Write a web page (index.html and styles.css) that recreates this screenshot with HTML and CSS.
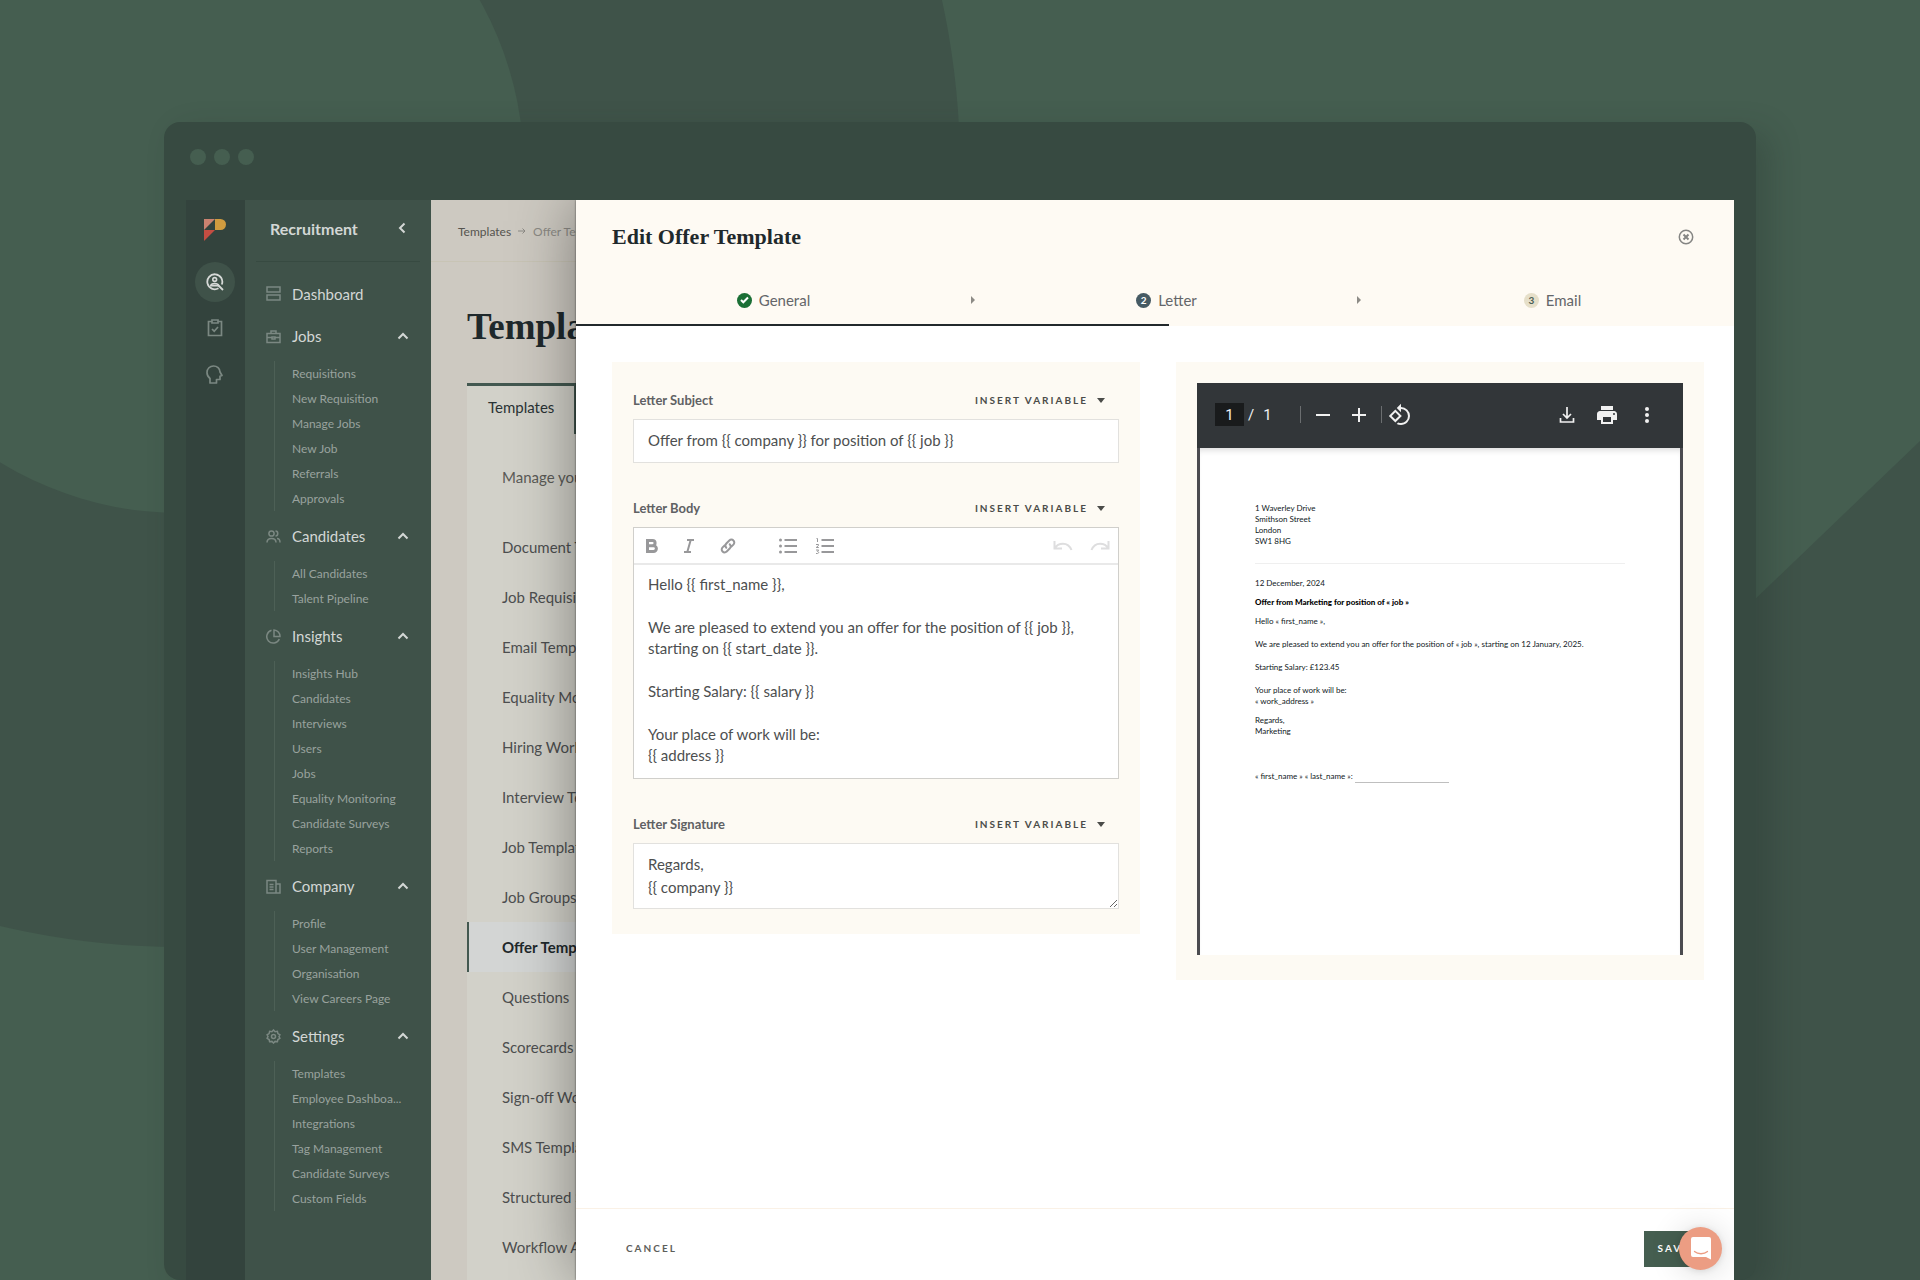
FILE: index.html
```html
<!DOCTYPE html>
<html lang="en">
<head>
<meta charset="utf-8">
<title>Edit Offer Template</title>
<link rel="stylesheet" href="styles.css">
</head>
<body>
<svg class="backdrop" viewBox="0 0 1920 1280" preserveAspectRatio="xMidYMid slice" aria-hidden="true">
  <circle cx="180" cy="167" r="780" fill="#3f5349"/>
  <circle cx="180" cy="169" r="344" fill="#455e50"/>
  <path d="M1920 441 1700 652 1100 1280h820z" fill="#3f5349"/>
</svg>
<div class="window">
  <div class="dots"><i></i><i></i><i></i></div>
  <div class="app">
    <nav class="rail" aria-label="Products">
      <a href="#" class="logo" aria-label="Home"><svg width="22" height="22" viewBox="0 0 22 22"><path d="M0 0h11L0 11z" fill="#ca8270"/><path d="M0 11h11L0 22z" fill="#c34d42"/><path d="M11 0h5.500a5.500 5.500 0 0 1 0 11H11z" fill="#d19c3f"/></svg></a>
      <a href="#" class="rail-link active" aria-label="Recruitment"><svg width="18" height="18" viewBox="0 0 18 18" fill="none" stroke="currentColor" stroke-width="1.800"><path d="M12.500 15.300A7.500 7.500 0 1 1 15.800 11.500M12 12l5 5"/><circle cx="8.700" cy="6.500" r="1.900" stroke-width="1.600"/><path d="M4.800 12.600c.5-2.800 7.300-2.800 7.800 0z" stroke-width="1.600"/></svg></a>
      <a href="#" class="rail-link" aria-label="Tasks"><svg width="16" height="18" viewBox="0 0 16 18" fill="none" stroke="currentColor" stroke-width="1.700"><path d="M4.500 2.500H1.500v14h13v-14h-3M5 1h6v3H5zM5 10l2.200 2.200L11 8"/></svg></a>
      <a href="#" class="rail-link" aria-label="People"><svg width="17" height="19" viewBox="0 0 17 19" fill="none" stroke="currentColor" stroke-width="1.700" stroke-linejoin="round"><path d="M4 18v-4.500C2 12 1 10 1 7.500 1 3.500 4 1 7.500 1S14 3.500 14 7l2 3.500-2 .7v3.300h-3.500V18z"/></svg></a>
    </nav>
    <nav class="sidebar" aria-label="Recruitment">
      <div class="side-head"><span>Recruitment</span><button type="button" aria-label="Collapse"><svg width="8" height="12" viewBox="0 0 8 12"><path d="M6.500 1.500 2 6l4.500 4.500"/></svg></button></div>
      <a href="#" class="side-top single"><svg class="ico" viewBox="0 0 15 15"><path d="M1 1h13v5H1zM1 9h13v5H1z"/></svg>Dashboard</a>

      <a href="#" class="side-top"><svg class="ico" viewBox="0 0 15 15"><path d="M1 4.500h13v9H1zM5 4.500V2h5v2.500M1 8.500h5M9 8.500h5M6 8v2h3V8z"/></svg>Jobs<svg class="chev" viewBox="0 0 12 8"><path d="M1.500 6.500 6 2l4.500 4.500"/></svg></a>
      <ul><li><a href="#">Requisitions</a></li><li><a href="#">New Requisition</a></li><li><a href="#">Manage Jobs</a></li><li><a href="#">New Job</a></li><li><a href="#">Referrals</a></li><li><a href="#">Approvals</a></li></ul>

      <a href="#" class="side-top"><svg class="ico" viewBox="0 0 15 15"><circle cx="5.500" cy="4.500" r="2.600"/><path d="M1 13.500c0-5.500 9-5.500 9 0M9.500 2c3 0 3 5 0 5M11 9.500c2 0 3 1.500 3 4"/></svg>Candidates<svg class="chev" viewBox="0 0 12 8"><path d="M1.500 6.500 6 2l4.500 4.500"/></svg></a>
      <ul><li><a href="#">All Candidates</a></li><li><a href="#">Talent Pipeline</a></li></ul>

      <a href="#" class="side-top"><svg class="ico" viewBox="0 0 15 15"><path d="M5.500 1.300A6.500 6.500 0 1 0 13.300 10M8 1v6.500h6A6.300 6.300 0 0 0 8 1z"/></svg>Insights<svg class="chev" viewBox="0 0 12 8"><path d="M1.500 6.500 6 2l4.500 4.500"/></svg></a>
      <ul><li><a href="#">Insights Hub</a></li><li><a href="#">Candidates</a></li><li><a href="#">Interviews</a></li><li><a href="#">Users</a></li><li><a href="#">Jobs</a></li><li><a href="#">Equality Monitoring</a></li><li><a href="#">Candidate Surveys</a></li><li><a href="#">Reports</a></li></ul>

      <a href="#" class="side-top"><svg class="ico" viewBox="0 0 15 15"><path d="M1 1.500h9V14H1zM10 5h4v9h-4M3.500 5.500h4M3.500 8h4M3.500 10.500h4"/></svg>Company<svg class="chev" viewBox="0 0 12 8"><path d="M1.500 6.500 6 2l4.500 4.500"/></svg></a>
      <ul><li><a href="#">Profile</a></li><li><a href="#">User Management</a></li><li><a href="#">Organisation</a></li><li><a href="#">View Careers Page</a></li></ul>

      <a href="#" class="side-top"><svg class="ico" viewBox="0 0 15 15"><path d="M7.500 1l1.600 1.700 2.300-.4.500 2.300 2 1.200L13 7.500l.9 1.800-2 1.200-.5 2.200-2.300-.3L7.500 14l-1.600-1.600-2.300.3-.5-2.200-2-1.200L2 7.500l-.9-1.700 2-1.200.5-2.300 2.300.4z"/><circle cx="7.500" cy="7.500" r="2"/></svg>Settings<svg class="chev" viewBox="0 0 12 8"><path d="M1.500 6.500 6 2l4.500 4.500"/></svg></a>
      <ul><li><a href="#">Templates</a></li><li><a href="#">Employee Dashboa...</a></li><li><a href="#">Integrations</a></li><li><a href="#">Tag Management</a></li><li><a href="#">Candidate Surveys</a></li><li><a href="#">Custom Fields</a></li></ul>
    </nav>
    <main class="page">
      <div class="crumbs"><a href="#">Templates</a><svg width="8" height="8" viewBox="0 0 8 8" fill="none" stroke="currentColor"><path d="M0 4h7M4.500 1.500 7 4 4.500 6.500"/></svg><span>Offer Templates</span></div>
      <h1>Templates</h1>
      <section class="card">
        <div class="tabs"><a href="#">Templates</a></div>
        <p>Manage your templates</p>
        <ul>
          <li><a href="#">Document Templates</a></li><li><a href="#">Job Requisitions</a></li><li><a href="#">Email Templates</a></li><li><a href="#">Equality Monitoring</a></li><li><a href="#">Hiring Workflows</a></li><li><a href="#">Interview Templates</a></li><li><a href="#">Job Templates</a></li><li><a href="#">Job Groups</a></li><li class="current"><a href="#">Offer Templates</a></li><li><a href="#">Questions</a></li><li><a href="#">Scorecards</a></li><li><a href="#">Sign-off Workflows</a></li><li><a href="#">SMS Templates</a></li><li><a href="#">Structured Surveys</a></li><li><a href="#">Workflow Automation</a></li>
        </ul>
      </section>
    </main>
    <section class="drawer" role="dialog" aria-labelledby="drawer-title">
      <header>
        <div class="title-row">
          <h2 id="drawer-title">Edit Offer Template</h2>
          <button type="button" class="close" aria-label="Close"><svg width="16" height="16" viewBox="0 0 16 16" fill="none" stroke="currentColor"><circle cx="8" cy="8" r="6.700" stroke-width="1.500"/><path d="M5.500 5.500l5 5M10.500 5.500l-5 5" stroke-width="2"/></svg></button>
        </div>
        <ol class="steps">
          <li><span class="step"><b class="num done"><svg width="9" height="8" viewBox="0 0 9 8" fill="none" stroke="#fff" stroke-width="2"><path d="M1 4l2.300 2.300L8 1.500"/></svg></b>General</span></li>
          <li><svg class="sep" viewBox="0 0 4 8"><path d="M0 0l4 4-4 4z"/></svg><span class="step"><b class="num now">2</b>Letter</span></li>
          <li><svg class="sep" viewBox="0 0 4 8"><path d="M0 0l4 4-4 4z"/></svg><span class="step"><b class="num">3</b>Email</span></li>
        </ol>
        <div class="progress"></div>
      </header>
      <div class="columns">
        <form class="panel" id="offer">
          <div class="field">
            <div class="label-row"><label for="subject">Letter Subject</label><button type="button" class="insert">Insert variable<svg viewBox="0 0 8 5"><path d="M0 0h8L4 5z"/></svg></button></div>
            <input id="subject" type="text" value="Offer from {{ company }} for position of {{ job }}">
          </div>
          <div class="field">
            <div class="label-row"><span class="label" id="body-label">Letter Body</span><button type="button" class="insert">Insert variable<svg viewBox="0 0 8 5"><path d="M0 0h8L4 5z"/></svg></button></div>
            <div class="editor">
              <div class="toolbar">
                <button type="button" aria-label="Bold"><svg viewBox="0 0 20 20" fill="none" stroke="currentColor" stroke-width="3"><path d="M5.500 4.500h5a2.500 2.500 0 0 1 0 5.200h-5zM5.500 9.700h6a2.800 2.800 0 0 1 0 5.800h-6z"/></svg></button>
                <button type="button" aria-label="Italic"><svg viewBox="0 0 20 20" fill="none" stroke="currentColor" stroke-width="2"><path d="M8 4h7M5 16h7M11.700 4 8.300 16"/></svg></button>
                <button type="button" class="link" aria-label="Link"><svg viewBox="0 0 20 20" fill="none" stroke="currentColor" stroke-width="2" stroke-linecap="round"><path d="M8.300 11.700c-1.500-1.500-1.200-3 0-4.200l3-3c1.300-1.200 3-1.200 4.100 0 1.200 1.200 1.200 2.900 0 4.100l-2 2M11.700 8.300c1.500 1.500 1.200 3 0 4.200l-3 3c-1.300 1.200-3 1.200-4.100 0-1.200-1.200-1.200-2.900 0-4.100l2-2"/></svg></button>
                <button type="button" class="list" aria-label="Bulleted list"><svg viewBox="0 0 20 20" fill="currentColor"><circle cx="2.500" cy="4" r="1.500"/><circle cx="2.500" cy="10" r="1.500"/><circle cx="2.500" cy="16" r="1.500"/><path d="M6.500 3h12.500v2H6.500zM6.500 9h12.500v2H6.500zM6.500 15h12.500v2H6.500z"/></svg></button>
                <button type="button" aria-label="Numbered list"><svg viewBox="0 0 20 20" fill="currentColor"><path d="M6.500 3h12.500v2H6.500zM6.500 9h12.500v2H6.500zM6.500 15h12.500v2H6.500z"/><path d="M1.500 2.500h1V6M1 8.500h2.500v1L1.200 11.500h2.600M1 14h2.700l-1.300 1.500c2 .2 1.500 2-.2 2H1" fill="none" stroke="currentColor"/></svg></button>
                <button type="button" class="undo" disabled aria-label="Undo"><svg viewBox="0 0 20 20" fill="none" stroke="currentColor" stroke-width="2"><path d="M1.500 5v7.500H9M1.500 12.500C5 6.500 15 5 18.500 14"/></svg></button>
                <button type="button" disabled aria-label="Redo"><svg viewBox="0 0 20 20" fill="none" stroke="currentColor" stroke-width="2"><path d="M18.500 5v7.500H11M18.500 12.500C15 6.500 5 5 1.500 14"/></svg></button>
              </div>
              <div class="rich" contenteditable="true" role="textbox" aria-multiline="true" aria-labelledby="body-label" spellcheck="false">
                <p>Hello {{ first_name }},</p>
                <p>We are pleased to extend you an offer for the position of {{ job }},<br>starting on {{ start_date }}.</p>
                <p>Starting Salary: {{ salary }}</p>
                <p>Your place of work will be:<br>{{ address }}</p>
              </div>
            </div>
          </div>
          <div class="field">
            <div class="label-row"><label for="signature">Letter Signature</label><button type="button" class="insert">Insert variable<svg viewBox="0 0 8 5"><path d="M0 0h8L4 5z"/></svg></button></div>
            <textarea id="signature" rows="2" spellcheck="false">Regards,
{{ company }}</textarea>
          </div>
        </form>
        <div class="panel preview">
          <div class="pdf">
            <div class="pdf-bar">
              <input type="text" value="1" aria-label="Page"><span class="slash">/</span><span>1</span>
              <i class="rule first"></i>
              <button type="button" aria-label="Zoom out"><svg width="20" height="20" viewBox="0 0 20 20"><path d="M3 9h14v2H3z"/></svg></button>
              <button type="button" class="plus" aria-label="Zoom in"><svg width="20" height="20" viewBox="0 0 20 20"><path d="M3 9h6V3h2v6h6v2h-6v6H9v-6H3z"/></svg></button>
              <i class="rule"></i>
              <button type="button" class="rotate" aria-label="Rotate"><svg width="24" height="24" viewBox="0 0 24 24"><path d="M7.340 6.410.860 12.900l6.490 6.480 6.490-6.480-6.500-6.490zM3.690 12.900l3.660-3.660L11 12.900l-3.660 3.660-3.650-3.660zm15.670-6.260A8.950 8.950 0 0 0 13 4V.760L8.760 5 13 9.240V6c1.790 0 3.580.680 4.950 2.050a7.007 7.007 0 0 1 0 9.900 6.973 6.973 0 0 1-7.790 1.440l-1.490 1.490C10.020 21.620 11.510 22 13 22c2.300 0 4.610-.880 6.360-2.640a8.980 8.980 0 0 0 0-12.720z"/></svg></button>
              <button type="button" class="download" aria-label="Download"><svg width="20" height="20" viewBox="0 0 20 20" fill="none" stroke="#f1f1f1" stroke-width="1.700"><path d="M10 2v10.500M6 9l4 4 4-4M3.500 13v4h13v-4"/></svg></button>
              <button type="button" aria-label="Print"><svg width="24" height="24" viewBox="0 0 24 24"><path d="M19 8H5c-1.660 0-3 1.340-3 3v6h4v4h12v-4h4v-6c0-1.660-1.340-3-3-3zm-3 11H8v-5h8v5zm3-7a1 1 0 1 1 0-2 1 1 0 0 1 0 2zM18 3H6v4h12V3z"/></svg></button>
              <button type="button" aria-label="More"><svg width="20" height="20" viewBox="0 0 20 20"><circle cx="10" cy="4" r="2"/><circle cx="10" cy="10" r="2"/><circle cx="10" cy="16" r="2"/></svg></button>
            </div>
            <article class="sheet">
              <address>1 Waverley Drive<br>Smithson Street<br>London<br>SW1 8HG</address>
              <p>12 December, 2024</p>
              <p><strong>Offer from Marketing for position of « job »</strong></p>
              <p>Hello « first_name »,</p>
              <p class="gap">We are pleased to extend you an offer for the position of « job », starting on 12 January, 2025.</p>
              <p class="gap">Starting Salary: £123.45</p>
              <p class="gap">Your place of work will be:<br>« work_address »</p>
              <p>Regards,<br>Marketing</p>
              <p class="sign"><span>« first_name » « last_name »:</span><i></i></p>
            </article>
          </div>
        </div>
      </div>
      <footer>
        <button type="button" class="cancel">Cancel</button>
        <button type="submit" form="offer" class="save">Save</button>
      </footer>
      <button type="button" class="chat" aria-label="Open chat"><svg width="20" height="23" viewBox="0 0 20 23"><path d="M2 0h16a2 2 0 0 1 2 2v20.500L15 20H2a2 2 0 0 1-2-2V2a2 2 0 0 1 2-2z" fill="#fff"/><path d="M3.500 14.500c3.500 3 9.500 3 13 0" fill="none" stroke="#ec9d83" stroke-width="1.300" stroke-linecap="round"/></svg></button>
    </section>
  </div>
</div>
</body>
</html>
```
FILE: styles.css
```css
* { box-sizing: border-box; }
body {
  margin: 0;
  height: 100vh;
  padding: 122px 164px 0;
  overflow: hidden;
  background: #455e50;
  font-family: Lato, "Liberation Sans", sans-serif;
  font-size: 15px;
  color: #4d4f50;
}
ul, ol { list-style: none; margin: 0; padding: 0; }
a { color: inherit; text-decoration: none; }
button { margin: 0; padding: 0; border: 0; background: none; color: inherit; font: inherit; cursor: pointer; }
svg { display: block; flex: none; }
.backdrop { position: absolute; inset: 0; width: 100%; height: 100%; }

.window {
  position: relative;
  height: 100%;
  display: flex;
  flex-direction: column;
  padding: 0 22px;
  border-radius: 16px;
  background: #374a41;
  box-shadow: 14px 10px 30px rgba(30, 45, 38, 0.25);
}
.dots { flex: none; height: 78px; display: flex; gap: 8px; padding: 27px 4px; }
.dots i { width: 16px; height: 16px; border-radius: 50%; background: #455e50; }
.app { flex: 1; min-height: 0; display: flex; overflow: hidden; }

.rail { flex: none; width: 59px; padding-right: 2px; display: flex; flex-direction: column; align-items: center; background: #33433d; }
.logo { margin: 19px 0 21px; }
.rail-link { width: 40px; height: 40px; margin-bottom: 6px; display: grid; place-items: center; border-radius: 50%; color: #7b8882; }
.rail-link.active { background: #3f5249; color: #d6d9d7; }

.sidebar { flex: none; width: 186px; background: #3f5249; color: #d3d7d5; }
.side-head {
  height: 62px; margin: 0 11px 14px; padding: 0 14px 5px;
  display: flex; align-items: center; justify-content: space-between;
  border-bottom: 1px solid #374a41; font-size: 16px; font-weight: 700;
}
.side-head svg, .chev { fill: none; stroke: #d3d7d5; stroke-width: 2; }
.side-top { display: flex; align-items: center; height: 50px; padding: 0 22px 0 21px; font-size: 15px; }
.side-top.single { height: 35px; }
.ico { width: 15px; height: 15px; margin-right: 11px; fill: none; stroke: #7b8882; stroke-width: 1.500; }
.chev { width: 12px; height: 8px; margin-left: auto; }
.sidebar ul { margin-left: 29px; padding-left: 17px; border-left: 1px solid #4d6056; }
.sidebar li { height: 25px; line-height: 25px; font-size: 12px; color: #99a29e; white-space: nowrap; }

.page { flex: 0 0 145px; display: flex; flex-direction: column; overflow: hidden; background: #cdc9c1; white-space: nowrap; }
.crumbs { flex: none; height: 62px; padding: 1px 27px 0; display: flex; align-items: center; gap: 7px; border-bottom: 1px solid #c8c4b5; font-size: 12px; color: #8b8984; }
.crumbs a { color: #55544f; }
h1 { margin: 44px 0 35px 36px; font: 700 37px/42px "Liberation Serif", serif; color: #1f292c; }
.card { flex: 1 0 auto; margin-left: 36px; background: #d2d1c9; border-top: 3px solid #435850; }
.tabs { width: 109px; height: 48px; line-height: 42px; padding-left: 21px; border-right: 2px solid #435850; color: #2a3335; }
.card p { margin: 31px 0 33px 35px; line-height: 24px; color: #5b5b57; }
.card li { height: 50px; line-height: 50px; padding-left: 35px; }
.card li.current { padding-left: 33px; border-left: 2px solid #435850; background: #d3d5d4; color: #1f292c; font-weight: 700; }

.drawer { position: relative; flex: 1; min-width: 0; display: flex; flex-direction: column; background: #fff; box-shadow: 0 0 60px rgba(0, 0, 0, 0.4), 0 0 2px rgba(0, 0, 0, 0.6); }
.drawer header { background: #fefaf3; }
.title-row { display: flex; align-items: center; justify-content: space-between; height: 76px; padding: 0 40px 2px 36px; }
h2 { margin: 0; font: 700 22px/28px "Liberation Serif", serif; color: #1f292c; }
.close { color: #858583; }
.steps { display: grid; grid-template-columns: repeat(3, 1fr); height: 48px; }
.steps li { display: flex; align-items: center; padding-left: 9px; }
.sep { width: 4px; height: 8px; margin-right: 10px; fill: #8d8b86; }
.step { flex: 1; display: flex; align-items: center; justify-content: center; gap: 7px; color: #646669; }
.num { width: 15px; height: 15px; display: grid; place-items: center; border-radius: 50%; background: #e6dfc9; color: #4b5f54; font-size: 10px; line-height: 15px; }
.num.now { background: #465a63; color: #fff; }
.num.done { background: #1b6f35; }
.progress { width: 51.25%; height: 2px; background: #22292c; }

.columns { flex: 1; display: grid; grid-template-columns: 1fr 1fr; gap: 36px; align-items: start; padding: 36px 30px 0 36px; }
.panel { padding: 21px 21px 25px; background: #fdfaf3; }
.field + .field { margin-top: 28px; }
.label-row { display: flex; align-items: center; justify-content: space-between; height: 36px; font-size: 13px; font-weight: 700; color: #5f6163; padding: 0 14px 2px 0; }
.insert { display: flex; align-items: center; gap: 9px; font-size: 10px; font-weight: 700; letter-spacing: 2px; text-transform: uppercase; color: #4b4c49; }
.insert svg { width: 8px; height: 5px; fill: #4b4c49; }
#subject, textarea { display: block; width: 100%; margin: 0; border: 1px solid #e2e1de; border-radius: 0; background: #fff; color: #4d4f50; font: inherit; }
#subject { height: 44px; padding: 0 14px 2px; }
textarea { height: 66px; padding: 9px 14px; line-height: 23px; }
.editor { border: 1px solid #d0cfcb; background: #fff; }
.toolbar { display: flex; align-items: center; height: 37px; padding: 0 8px; border-bottom: 2px solid #e9e9e9; color: #98989a; }
.toolbar button { width: 20px; height: 20px; margin-right: 17px; }
.toolbar .link { margin-left: 2px; }
.toolbar .list { margin-left: 23px; }
.toolbar .undo { margin-left: auto; }
.toolbar button:disabled { color: #dededf; }
.toolbar button:last-child { margin-right: 0; }
.rich { padding: 9px 14px 12px; line-height: 21px; outline: 0; }
.rich p { margin: 0 0 22px; }
.rich p:last-child { margin: 0; }

.pdf-bar { display: flex; align-items: center; height: 65px; padding: 0 26px 2px 18px; background: #323639; color: #f1f1f1; fill: #f1f1f1; font-family: Roboto, sans-serif; font-size: 15px; }
.pdf-bar input { width: 29px; height: 23px; padding: 0; border: 0; background: #191b1c; color: inherit; font: inherit; text-align: center; }
.slash { margin: 0 9px 0 4px; }
.rule { width: 1px; height: 17px; background: #6b6e70; }
.rule.first { margin: 0 12px 0 28px; }
.plus { margin: 0 12px 0 16px; }
.rotate { margin-left: 6px; }
.download { margin: 0 18px 0 auto; }
.pdf-bar button:last-child { margin-left: 18px; }
.sheet { border: solid #4b4b50; border-width: 0 3px; height: 507px; padding: 55px 55px 0; background: #fff; box-shadow: inset 0 6px 6px -4px rgba(0, 0, 0, 0.15); font-size: 8px; line-height: 11px; color: #10191c; }
.sheet address { font-style: normal; padding-bottom: 16px; border-bottom: 1px solid #efefef; margin-bottom: 14px; }
.sheet p { margin: 0 0 8px; }
.sheet p.gap { margin-top: 12px; }
.sheet strong { font-weight: 900; color: #000; }
.sheet .sign { display: flex; gap: 2px; margin-top: 34px; }
.sign i { width: 94px; height: 12px; border-bottom: 1px solid #bfbfbf; }

.drawer footer { flex: none; display: flex; align-items: center; justify-content: space-between; height: 72px; padding: 8px 30px 0 36px; border-top: 1px solid #faf1e6; font-size: 10px; font-weight: 700; }
.drawer footer button { height: 36px; padding: 0 14px 2px; letter-spacing: 2px; text-transform: uppercase; }
.cancel { color: #5d5e5b; }
.drawer .save { background: #455e50; color: #fff; }
.chat { position: absolute; right: 12px; bottom: 10px; width: 43px; height: 43px; display: grid; place-items: center; border-radius: 50%; background: #ec9d83; box-shadow: 0 1px 6px rgba(0, 0, 0, 0.1), 0 2px 32px rgba(0, 0, 0, 0.16); }
```
